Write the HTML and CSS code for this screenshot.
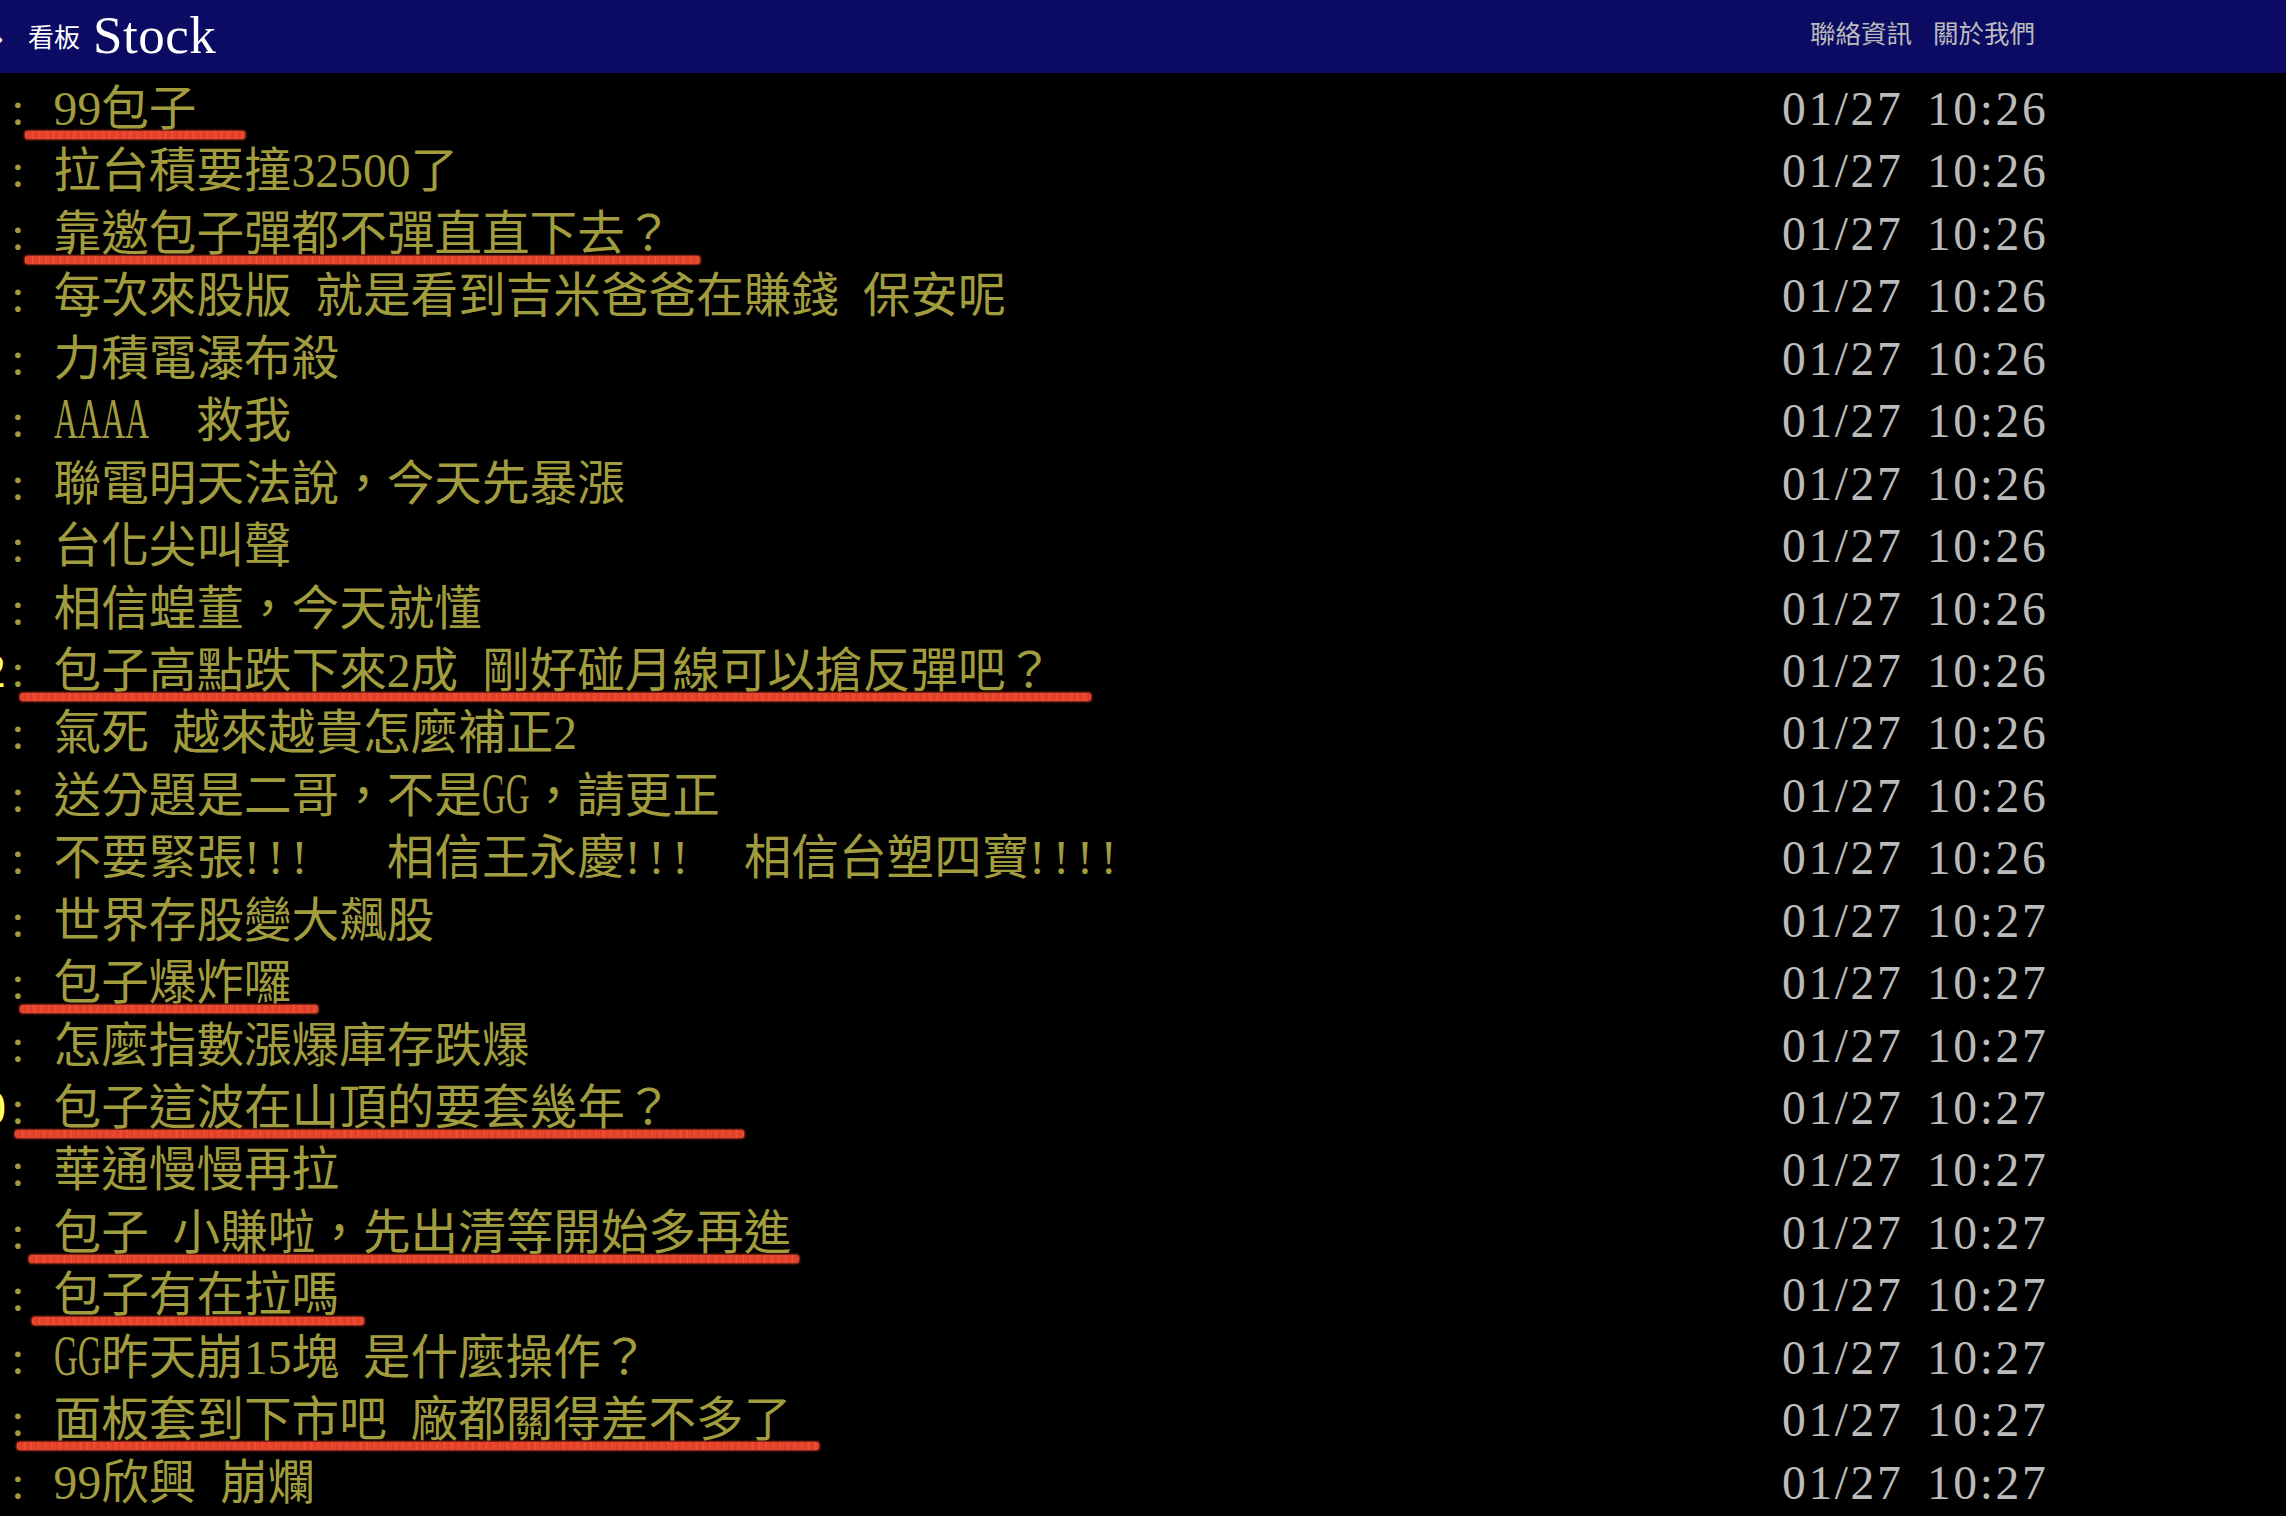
FILE: index.html
```html
<!DOCTYPE html>
<html lang="zh-Hant">
<head>
<meta charset="utf-8">
<title>看板 Stock</title>
<link rel="stylesheet" href="styles.css">
</head>
<body>
<header class="topbar">
  <span class="crumb">›</span>
  <span class="board-label">看板</span>
  <span class="board-name">Stock</span>
  <nav class="links">
    <a class="link">聯絡資訊</a>
    <a class="link">關於我們</a>
  </nav>
</header>
<main class="pushes">
  <div class="push"><span class="uid"></span><span class="content"><span class="c">:</span> 99包子</span><span class="time">01/27 10:26</span><span class="mark m0"></span></div>
  <div class="push"><span class="uid"></span><span class="content"><span class="c">:</span> 拉台積要撞32500了</span><span class="time">01/27 10:26</span></div>
  <div class="push"><span class="uid"></span><span class="content"><span class="c">:</span> 靠邀包子彈都不彈直直下去？</span><span class="time">01/27 10:26</span><span class="mark m2"></span></div>
  <div class="push"><span class="uid"></span><span class="content"><span class="c">:</span> 每次來股版 就是看到吉米爸爸在賺錢 保安呢</span><span class="time">01/27 10:26</span></div>
  <div class="push"><span class="uid"></span><span class="content"><span class="c">:</span> 力積電瀑布殺</span><span class="time">01/27 10:26</span></div>
  <div class="push"><span class="uid"></span><span class="content"><span class="c">:</span> <span class="hw hw4">AAAA</span>  救我</span><span class="time">01/27 10:26</span></div>
  <div class="push"><span class="uid"></span><span class="content"><span class="c">:</span> 聯電明天法說，今天先暴漲</span><span class="time">01/27 10:26</span></div>
  <div class="push"><span class="uid"></span><span class="content"><span class="c">:</span> 台化尖叫聲</span><span class="time">01/27 10:26</span></div>
  <div class="push"><span class="uid"></span><span class="content"><span class="c">:</span> 相信蝗董，今天就懂</span><span class="time">01/27 10:26</span></div>
  <div class="push"><span class="uid"><span class="uid-text">2</span></span><span class="content"><span class="c">:</span> 包子高點跌下來2成 剛好碰月線可以搶反彈吧？</span><span class="time">01/27 10:26</span><span class="mark m9"></span></div>
  <div class="push"><span class="uid"></span><span class="content"><span class="c">:</span> 氣死 越來越貴怎麼補正2</span><span class="time">01/27 10:26</span></div>
  <div class="push"><span class="uid"></span><span class="content"><span class="c">:</span> 送分題是二哥，不是<span class="hw hw2">GG</span>，請更正</span><span class="time">01/27 10:26</span></div>
  <div class="push"><span class="uid"></span><span class="content"><span class="c">:</span> 不要緊張<span class="bang">!!!</span>   相信王永慶<span class="bang">!!!</span>  相信台塑四寶<span class="bang">!!!!</span></span><span class="time">01/27 10:26</span></div>
  <div class="push"><span class="uid"></span><span class="content"><span class="c">:</span> 世界存股變大飆股</span><span class="time">01/27 10:27</span></div>
  <div class="push"><span class="uid"></span><span class="content"><span class="c">:</span> 包子爆炸囉</span><span class="time">01/27 10:27</span><span class="mark m14"></span></div>
  <div class="push"><span class="uid"></span><span class="content"><span class="c">:</span> 怎麼指數漲爆庫存跌爆</span><span class="time">01/27 10:27</span></div>
  <div class="push"><span class="uid"><span class="uid-text">0</span></span><span class="content"><span class="c">:</span> 包子這波在山頂的要套幾年？</span><span class="time">01/27 10:27</span><span class="mark m16"></span></div>
  <div class="push"><span class="uid"></span><span class="content"><span class="c">:</span> 華通慢慢再拉</span><span class="time">01/27 10:27</span></div>
  <div class="push"><span class="uid"></span><span class="content"><span class="c">:</span> 包子 小賺啦，先出清等開始多再進</span><span class="time">01/27 10:27</span><span class="mark m18"></span></div>
  <div class="push"><span class="uid"></span><span class="content"><span class="c">:</span> 包子有在拉嗎</span><span class="time">01/27 10:27</span><span class="mark m19"></span></div>
  <div class="push"><span class="uid"></span><span class="content"><span class="c">:</span> <span class="hw hw2">GG</span>昨天崩15塊 是什麼操作？</span><span class="time">01/27 10:27</span></div>
  <div class="push"><span class="uid"></span><span class="content"><span class="c">:</span> 面板套到下市吧 廠都關得差不多了</span><span class="time">01/27 10:27</span><span class="mark m21"></span></div>
  <div class="push"><span class="uid"></span><span class="content"><span class="c">:</span> 99欣興 崩爛</span><span class="time">01/27 10:27</span></div>
</main>
</body>
</html>
```
FILE: styles.css
```css
html, body {
  margin: 0;
  padding: 0;
  background: #000;
}
body {
  width: 2286px;
  height: 1516px;
  overflow: hidden;
  font-family: "Liberation Serif", "Noto Sans CJK TC", serif;
}

/* top bar */
.topbar {
  height: 73px;
  background: #0b0b63;
  display: flex;
  align-items: center;
  color: #fff;
}
.crumb {
  display: inline-flex;
  justify-content: flex-end;
  width: 4px;
  overflow: hidden;
  font-size: 26px;
  line-height: 1;
  margin-top: 2px;
}
.board-label {
  margin-left: 24px;
  font-size: 26px;
  line-height: 1;
  margin-top: 4px;
}
.board-name {
  margin-left: 13px;
  font-size: 53px;
  line-height: 1;
  letter-spacing: 0.5px;
  margin-top: -3px;
}
.links {
  margin-left: auto;
  padding-right: 251px;
  display: flex;
  gap: 21px;
  margin-top: -4px;
}
.link {
  color: #bbb;
  font-size: 25.5px;
  line-height: 1;
  text-decoration: none;
}

/* push list */
.pushes {
  padding-top: 5px;
  font-size: 47.6px;
  line-height: 62.45px;
}
.push {
  position: relative;
  display: grid;
  grid-template-columns: 6px 1776px 1fr;
  height: 62.45px;
  white-space: pre;
}
.uid {
  display: flex;
  justify-content: flex-end;
  overflow: hidden;
  color: #ffff66;
}
.content {
  color: #a19d3f;
  word-spacing: 0.25em;
}
.c {
  display: inline-block;
  width: 0.5em;
  text-align: center;
}
.hw {
  display: inline-block;
  transform: scale(0.69, 1.18);
  transform-origin: 0 66%;
}
.hw2 { margin-right: -0.448em; }
.hw4 { margin-right: -0.895em; }
.bang { letter-spacing: 0.167em; }
.time {
  color: #bbb;
  letter-spacing: 2.6px;
  word-spacing: 9px;
}

/* hand-drawn red underline annotations */
.mark {
  position: absolute;
  top: 53px;
  height: 8px;
  border-radius: 3px;
  background:
    repeating-linear-gradient(90deg, rgba(255,110,80,0.35) 0 1px, transparent 1px 4px, rgba(170,30,20,0.18) 4px 5px, transparent 5px 7px),
    #e5432b;
  box-shadow: 0 0 2px 1px rgba(229, 67, 43, 0.75);
}
.m0 { left: 25px; width: 220px; }
.m2 { left: 25px; width: 675px; }
.m9 { left: 20px; width: 1071px; }
.m14 { left: 20px; width: 298px; }
.m16 { left: 15px; width: 729px; }
.m18 { left: 29px; width: 770px; }
.m19 { left: 32px; width: 332px; }
.m21 { left: 17px; width: 802px; }
```
